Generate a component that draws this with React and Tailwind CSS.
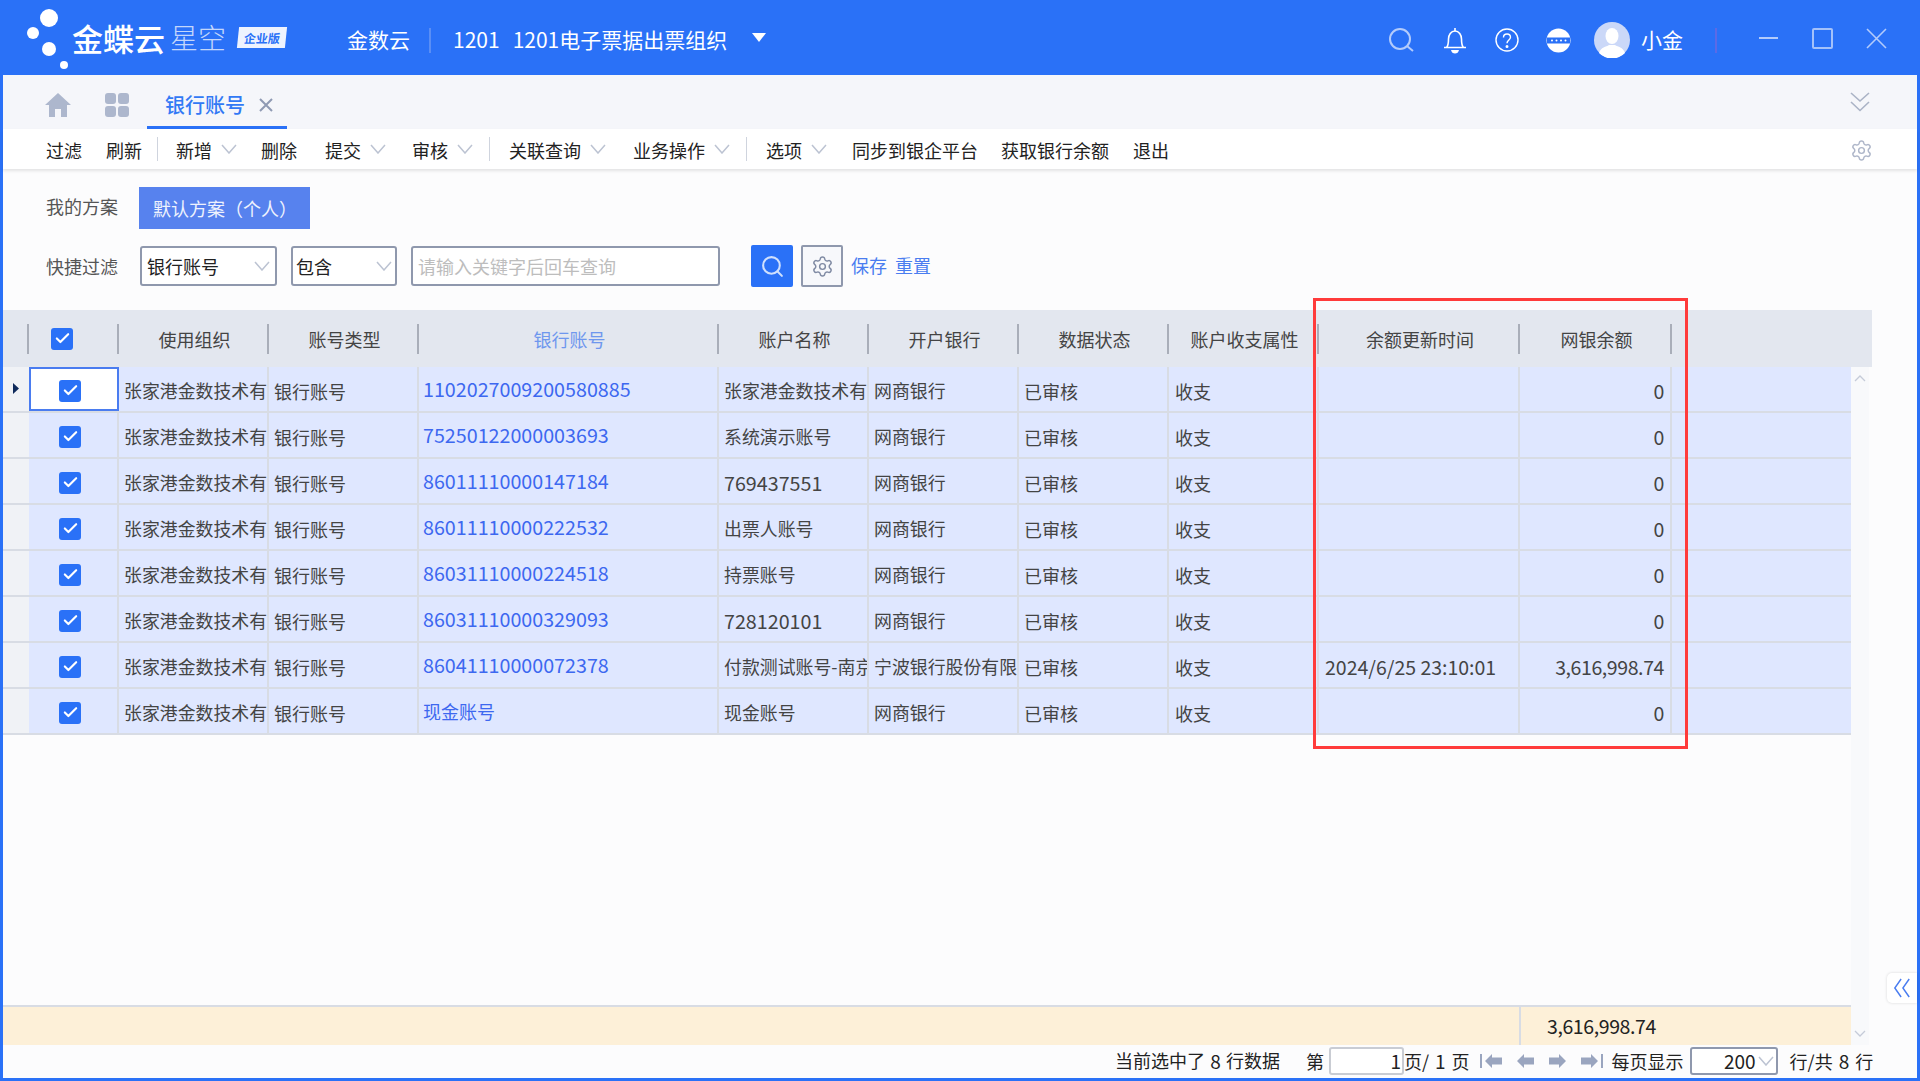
import React from "react";
import { Settings, Search, Check } from "lucide-react";

const FONT = "font-['Noto_Sans_CJK_SC','Noto_Sans',sans-serif]";

const toolbarItems = [
  { label: "过滤", ml: "ml-[43px]" },
  { label: "刷新", ml: "ml-[24px]" },
  { sep: true, ml: "ml-[15px]" },
  { label: "新增", ml: "ml-[18px]", caret: true },
  { label: "删除", ml: "ml-[24px]" },
  { label: "提交", ml: "ml-[28px]", caret: true },
  { label: "审核", ml: "ml-[26px]", caret: true },
  { sep: true, ml: "ml-[16px]" },
  { label: "关联查询", ml: "ml-[19px]", caret: true },
  { label: "业务操作", ml: "ml-[27px]", caret: true },
  { sep: true, ml: "ml-[16px]" },
  { label: "选项", ml: "ml-[19px]", caret: true },
  { label: "同步到银企平台", ml: "ml-[25px]" },
  { label: "获取银行余额", ml: "ml-[23px]" },
  { label: "退出", ml: "ml-[24px]" },
];

// width of every grid column, the first is the row marker
const columns = [
  { title: "", w: "w-[90px]" },
  { title: "使用组织", w: "w-[150px]" },
  { title: "账号类型", w: "w-[150px]" },
  { title: "银行账号", w: "w-[300px]", active: true },
  { title: "账户名称", w: "w-[150px]" },
  { title: "开户银行", w: "w-[150px]" },
  { title: "数据状态", w: "w-[150px]" },
  { title: "账户收支属性", w: "w-[150px]" },
  { title: "余额更新时间", w: "w-[201px]" },
  { title: "网银余额", w: "w-[152px]" },
];

const rows = [
  { account: "1102027009200580885", name: "张家港金数技术有", bank: "网商银行", time: "", amount: "0" },
  { account: "75250122000003693", name: "系统演示账号", bank: "网商银行", time: "", amount: "0" },
  { account: "86011110000147184", name: "769437551", bank: "网商银行", time: "", amount: "0", numName: true },
  { account: "86011110000222532", name: "出票人账号", bank: "网商银行", time: "", amount: "0" },
  { account: "86031110000224518", name: "持票账号", bank: "网商银行", time: "", amount: "0" },
  { account: "86031110000329093", name: "728120101", bank: "网商银行", time: "", amount: "0", numName: true },
  { account: "86041110000072378", name: "付款测试账号-南京", bank: "宁波银行股份有限", time: "2024/6/25 23:10:01", amount: "3,616,998.74" },
  { account: "现金账号", name: "现金账号", bank: "网商银行", time: "", amount: "0", cashRow: true },
];

const Caret = ({ className = "" }) => (
  <svg viewBox="0 0 16 10" className={`w-[16px] h-[10px] ${className}`} fill="none" stroke="#bcc3d2" strokeWidth="1.5">
    <path d="M1 1l7 8 7-8" />
  </svg>
);

const CheckBox = ({ className = "" }) => (
  <span className={`flex items-center justify-center w-[22px] h-[22px] rounded-[3px] bg-[#2a71f7] ${className}`}>
    <Check size={17} color="#fff" strokeWidth={3} />
  </span>
);

const Cell = ({ w, className = "", children }) => (
  <div className={`${w} shrink-0 h-full flex items-center pt-[3px] overflow-hidden whitespace-nowrap border-r-2 border-[#d8dce4] ${className}`}>
    {children}
  </div>
);

const PagerArrow = ({ dir, edge, className = "" }) => (
  <svg viewBox="0 0 24 16" className={`h-[16px] w-[24px] ${className}`} fill="#9aa5bf">
    <g transform={dir === "right" ? "matrix(-1 0 0 1 24 0)" : undefined}>
      {edge && <rect x="0" y="1" width="2" height="14" />}
      <path d="M5 8l7-7v3.5h10v7H12V15z" />
    </g>
  </svg>
);

const Logo = () => (
  <svg viewBox="0 0 52 70" className="w-[52px] h-[70px] shrink-0 ml-[20px]" fill="#fff">
    <circle cx="29" cy="13" r="9" />
    <circle cx="13" cy="28" r="6" />
    <circle cx="29" cy="44" r="7" />
    <circle cx="44" cy="60" r="4" />
  </svg>
);

const TopBar = () => (
  <div className="h-[75px] shrink-0 pt-[5px] flex items-center bg-[#2a71f7] text-white -mx-[3px]">
    <Logo />
    <span className="w-[98px] shrink-0 -mt-[6px] text-[31px] font-medium leading-none whitespace-nowrap">金蝶云</span>
    <span className="w-[68px] shrink-0 -mt-[6px] text-[28px] font-light leading-none text-[#c3d6fb]">星空</span>
    <span className="w-[48px] h-[21px] shrink-0 -mt-[6px] flex items-center justify-center -skew-x-6 bg-[#eef3fe] text-[#2a71f7] text-[12px] font-bold leading-none">企业版</span>
    <span className="ml-[61px] -mt-[2px] text-[21px] leading-none">金数云</span>
    <i className="ml-[19px] w-[2px] h-[25px] bg-[#5a8ef5]" />
    <span className="ml-[22px] -mt-[2px] w-[299px] shrink-0 text-[21px] leading-none whitespace-nowrap">
      1201<span className="ml-[13px]">1201电子票据出票组织</span>
    </span>
    <svg viewBox="0 0 14 9" className="w-[14px] h-[9px] -mt-[6px]" fill="#fff"><path d="M0 0h14L7 9z" /></svg>

    <div className="ml-auto mr-[33px] flex items-center">
      <svg viewBox="0 0 25 24" className="w-[25px] h-[24px]" fill="none" stroke="#b3cbfb" strokeWidth="2">
        <circle cx="11" cy="11" r="10" />
        <path d="M18 18l6 5" />
      </svg>
      <svg viewBox="0 0 24 27" className="ml-[29px] w-[24px] h-[27px]" fill="none" stroke="#fff" strokeWidth="1.6">
        <path d="M1 20.5h22M3.5 20.5c2-2 2-4.500 2-8.500 0-4 2.500-8 6.500-8s6.500 4 6.500 8c0 4 0 6.500 2 8.500" />
        <path d="M12 1v3" />
        <path d="M8 23h8c-.5 2.500-2 3.500-4 3.500s-3.500-1-4-3.500z" fill="#fff" stroke="none" />
      </svg>
      <svg viewBox="0 0 24 24" className="ml-[28px] w-[24px] h-[24px]" fill="none" stroke="#fff" strokeWidth="1.4">
        <circle cx="12" cy="12" r="11" />
        <path d="M8.500 9.500c0-2 1.500-3.500 3.500-3.500s3.500 1.400 3.500 3.300c0 2.700-3.500 2.700-3.500 6" />
        <circle cx="12" cy="18.500" r=".8" fill="#fff" />
      </svg>
      <svg viewBox="0 0 25 25" className="ml-[27px] w-[25px] h-[25px]">
        <circle cx="12.500" cy="12.500" r="12" fill="#fff" />
        <rect x="1" y="9.500" width="23" height="6" fill="#2a71f7" />
        <circle cx="6" cy="12.500" r="1" fill="#fff" />
        <circle cx="10.500" cy="12.500" r="1" fill="#fff" />
        <circle cx="15" cy="12.500" r="1" fill="#fff" />
        <circle cx="19.500" cy="12.500" r="1" fill="#fff" />
      </svg>
      <svg viewBox="0 0 36 36" className="ml-[23px] w-[36px] h-[36px]">
        <circle cx="18" cy="18" r="18" fill="#cbd8f8" />
        <ellipse cx="18" cy="14" rx="6.500" ry="8" fill="#fff" />
        <path d="M5 31c2-6 7-6 10-8h6c3 2 8 2 10 8a18 18 0 0 1-26 0z" fill="#fff" />
      </svg>
      <span className="ml-[11px] -mt-[2px] w-[42px] text-[21px] leading-none whitespace-nowrap">小金</span>
      <i className="ml-[32px] w-[2px] h-[25px] bg-[#5b6ae6]" />
      <i className="ml-[42px] mb-[4px] w-[19px] h-[2px] bg-[#b3cbfb]" />
      <i className="ml-[34px] -mt-[3px] w-[21px] h-[21px] rounded-[2px] border-2 border-[#a4c1fa]" />
      <svg viewBox="0 0 21 21" className="ml-[33px] -mt-[3px] w-[21px] h-[21px]" stroke="#b3cbfb" strokeWidth="1.6">
        <path d="M1 1l19 19M20 1L1 20" />
      </svg>
    </div>
  </div>
);

const TabBar = () => (
  <div className="h-[54px] shrink-0 flex bg-[#f5f6fa]">
    <svg viewBox="0 0 26 24" className="ml-[42px] mt-[18px] w-[26px] h-[24px]" fill="#adb7cd">
      <path d="M13 0l13 12h-4v12h-6v-8h-6v8H4V12H0z" />
    </svg>
    <div className="ml-[34px] mt-[18px] w-[24px] h-[24px] grid grid-cols-2 gap-[2px]">
      <i className="rounded-[3px] bg-[#adb7cd]" />
      <i className="rounded-[3px] bg-[#adb7cd]" />
      <i className="rounded-[3px] bg-[#adb7cd]" />
      <i className="rounded-[3px] bg-[#adb7cd]" />
    </div>
    <div className="ml-[18px] w-[140px] flex items-center pl-[18px] pt-[8px] border-b-[3px] border-[#2a71f7]">
      <span className="text-[20px] font-medium leading-none text-[#3279f5] whitespace-nowrap">银行账号</span>
      <svg viewBox="0 0 14 14" className="ml-[14px] w-[14px] h-[14px]" stroke="#8f9ab3" strokeWidth="2">
        <path d="M1 1l12 12M13 1L1 13" />
      </svg>
    </div>
    <svg viewBox="0 0 20 20" className="ml-auto mr-[47px] mt-[17px] w-[20px] h-[20px]" fill="none" stroke="#aab3c6" strokeWidth="1.6">
      <path d="M1 1l9 8 9-8M1 10l9 8.500 9-8.500" />
    </svg>
  </div>
);

const Toolbar = () => (
  <div className="relative z-10 h-[40px] shrink-0 pt-[2px] flex items-center bg-white text-[18px] leading-none text-[#222] shadow-[0_2px_3px_rgba(0,0,0,0.1)]">
    {toolbarItems.map((item, i) =>
      item.sep ? (
        <i key={i} className={`${item.ml} -mt-[2px] w-[1px] h-[24px] bg-[#cfd4de]`} />
      ) : (
        <span key={i} className={`${item.ml} flex items-center whitespace-nowrap`}>
          {item.label}
          {item.caret && <Caret className="ml-[9px] -mt-[2px]" />}
        </span>
      )
    )}
    <Settings size={23} color="#aeb6c9" strokeWidth={1.5} className="ml-auto mr-[44px]" />
  </div>
);

const FilterArea = () => (
  <div className="shrink-0 text-[18px] leading-none">
    <div className="mt-[18px] h-[42px] flex items-center">
      <span className="ml-[43px] -mt-[5px] text-[#555]">我的方案</span>
      <span className="ml-[21px] w-[171px] h-[42px] pl-[14px] flex items-center bg-[#5782ee] text-[#eef2fd] whitespace-nowrap">默认方案（个人）</span>
    </div>
    <div className="mt-[17px] h-[40px] flex items-center">
      <span className="ml-[43px] text-[#555]">快捷过滤</span>
      <div className="ml-[22px] w-[137px] h-[40px] px-[5px] flex items-center justify-between rounded-[3px] border-2 border-[#8f98ad] bg-white text-[#222]">
        银行账号<Caret />
      </div>
      <div className="ml-[14px] w-[106px] h-[40px] px-[3px] flex items-center justify-between rounded-[3px] border-2 border-[#8f98ad] bg-white text-[#222]">
        包含<Caret />
      </div>
      <div className="ml-[14px] w-[309px] h-[40px] px-[5px] flex items-center rounded-[3px] border-2 border-[#8f98ad] bg-white text-[#bdbdbd]">
        请输入关键字后回车查询
      </div>
      <span className="ml-[31px] w-[42px] h-[42px] flex items-center justify-center rounded-[2px] bg-[#2a71f7]">
        <Search size={25} color="#cfe0fd" strokeWidth={2} />
      </span>
      <span className="ml-[8px] w-[42px] h-[42px] flex items-center justify-center rounded-[2px] border-2 border-[#8f98ad] bg-[#f7f8fb]">
        <Settings size={23} color="#7f8aa3" strokeWidth={1.5} />
      </span>
      <span className="ml-[8px] -mt-[2px] text-[#4a7df0]">保存</span>
      <span className="ml-[8px] -mt-[2px] text-[#4a7df0]">重置</span>
    </div>
  </div>
);

const TableHeader = () => (
  <div className="mt-[24px] w-[1869px] h-[57px] shrink-0 flex items-center bg-[#e3e7ef] text-[18px] leading-none text-[#444] whitespace-nowrap">
    <i className="ml-[24px] w-[2px] h-[30px] bg-[#a9aeb9]" />
    {columns.map((col, i) => (
      <div key={i} className={`${col.w} shrink-0 flex items-center`}>
        {i === 0 ? (
          <span className="flex-1 pl-[22px]"><CheckBox /></span>
        ) : (
          <span className={`flex-1 pl-[3px] text-center ${col.active ? "text-[#6f97ee]" : ""}`}>{col.title}</span>
        )}
        <i className="w-[2px] h-[30px] bg-[#a9aeb9]" />
      </div>
    ))}
  </div>
);

const Row = ({ row, first }) => (
  <div className="h-[46px] shrink-0 flex border-b-2 border-[#d8dce4] bg-[#dfe7ff] text-[18px] leading-none text-[#444]">
    <div className="w-[26px] shrink-0 flex items-center bg-[#f0f2f6]">
      {first && (
        <svg viewBox="0 0 6 11" className="ml-[10px] w-[6px] h-[11px] -mt-[2px]" fill="#0f2a5c"><path d="M0 0l6 5.500L0 11z" /></svg>
      )}
    </div>
    <Cell w="w-[90px]" className={first ? "outline-2 -outline-offset-2 outline-[#4a7cf0] bg-white pl-[30px]" : "pl-[30px]"}>
      <CheckBox />
    </Cell>
    <Cell w="w-[150px]" className="pl-[5px] text-[17.9px]">张家港金数技术有</Cell>
    <Cell w="w-[150px]" className="pl-[5px]">银行账号</Cell>
    <Cell w="w-[300px]" className={`pl-[4px] pb-[3px] text-[#3d68f0] ${row.cashRow ? "" : "text-[19.7px]"}`}>{row.account}</Cell>
    <Cell w="w-[150px]" className={`pl-[5px] ${row.numName ? "text-[19.7px]" : "text-[17.9px]"}`}>{row.name}</Cell>
    <Cell w="w-[150px]" className="pl-[5px] text-[17.9px]">{row.bank}</Cell>
    <Cell w="w-[150px]" className="pl-[5px]">已审核</Cell>
    <Cell w="w-[150px]" className="pl-[6px]">收支</Cell>
    <Cell w="w-[201px]" className="pl-[6px] text-[19.5px]">{row.time}</Cell>
    <Cell w="w-[152px]" className="pr-[6px] justify-end text-[19.5px] tracking-[-0.4px]">{row.amount}</Cell>
  </div>
);

const Pager = () => (
  <div className="h-[33px] shrink-0 pb-[2px] flex items-center text-[18px] leading-none text-[#222] whitespace-nowrap">
    <span className="ml-[1112px] w-[165px] flex justify-between">
      <span>当前选中了</span>
      <span className="text-[19px]">8</span>
      <span>行数据</span>
    </span>
    <span className="ml-[26px]">第</span>
    <span className="ml-[5px] w-[75px] h-[28px] flex items-center justify-end pr-[1px] rounded-[3px] border-2 border-[#c9ccd3] bg-white text-[19px]">1</span>
    <span className="flex items-center">页/<span className="mx-[6px] text-[19px]">1</span>页</span>
    <PagerArrow edge className="ml-[10px]" />
    <PagerArrow className="ml-[8px]" />
    <PagerArrow dir="right" className="ml-[11px]" />
    <PagerArrow dir="right" edge className="ml-[8px]" />
    <span className="ml-[9px]">每页显示</span>
    <span className="ml-[6px] w-[88px] h-[28px] flex items-center justify-end rounded-[3px] border-2 border-[#8f98ad] bg-white pr-[2px] text-[19px]">
      200<Caret className="ml-[2px]" />
    </span>
    <span className="ml-[12px] flex items-center">行/共<span className="mx-[6px] text-[19px]">8</span>行</span>
  </div>
);

const App = () => {
  return (
    <div className={`w-[1920px] h-[1081px] px-[3px] pb-[3px] flex flex-col overflow-hidden bg-[#2a71f7] ${FONT}`}>
      <TopBar />
      <div className="relative flex-1 min-h-0 flex flex-col bg-[#fcfcfd]">
        <TabBar />
        <Toolbar />
        <FilterArea />
        <TableHeader />

        <div className="flex-1 min-h-0 flex">
          <div className="w-[1848px] shrink-0 flex flex-col overflow-hidden">
            {rows.map((row, i) => (
              <Row key={row.account} row={row} first={i === 0} />
            ))}
            <div className="flex-1" />
            <div className="h-[40px] shrink-0 flex items-center border-t-2 border-[#d8dce4] bg-[#fdf0d8] text-[19.5px] tracking-[-0.4px] leading-none text-[#222]">
              <span className="ml-[1516px] w-[2px] h-full bg-[#d8dce4]" />
              <span className="ml-[26px]">3,616,998.74</span>
            </div>
          </div>
          <div className="w-[18px] shrink-0 flex flex-col justify-between items-center py-[8px] bg-[#f8f9fb]">
            <svg viewBox="0 0 12 7" className="w-[12px] h-[7px]" fill="none" stroke="#c5cbd8" strokeWidth="1.3"><path d="M1 6l5-5 5 5" /></svg>
            <svg viewBox="0 0 12 7" className="w-[12px] h-[7px]" fill="none" stroke="#c5cbd8" strokeWidth="1.3"><path d="M1 1l5 5 5-5" /></svg>
          </div>
        </div>

        <Pager />

        {/* red mark laid over the two balance columns */}
        <div className="absolute left-[1310px] top-[223px] w-[375px] h-[451px] border-[3px] border-[#ff3b3b]" />

        <div className="absolute right-0 top-[898px] w-[30px] h-[30px] flex items-center justify-center rounded-l-[5px] bg-white shadow-[0_0_3px_rgba(0,0,0,0.15)]">
          <svg viewBox="0 0 20 24" className="w-[18px] h-[22px]" fill="none" stroke="#4a7df0" strokeWidth="1.6">
            <path d="M9 2L2 12l7 10M18 2l-7 10 7 10" />
          </svg>
        </div>
      </div>
    </div>
  );
};

export default App;
